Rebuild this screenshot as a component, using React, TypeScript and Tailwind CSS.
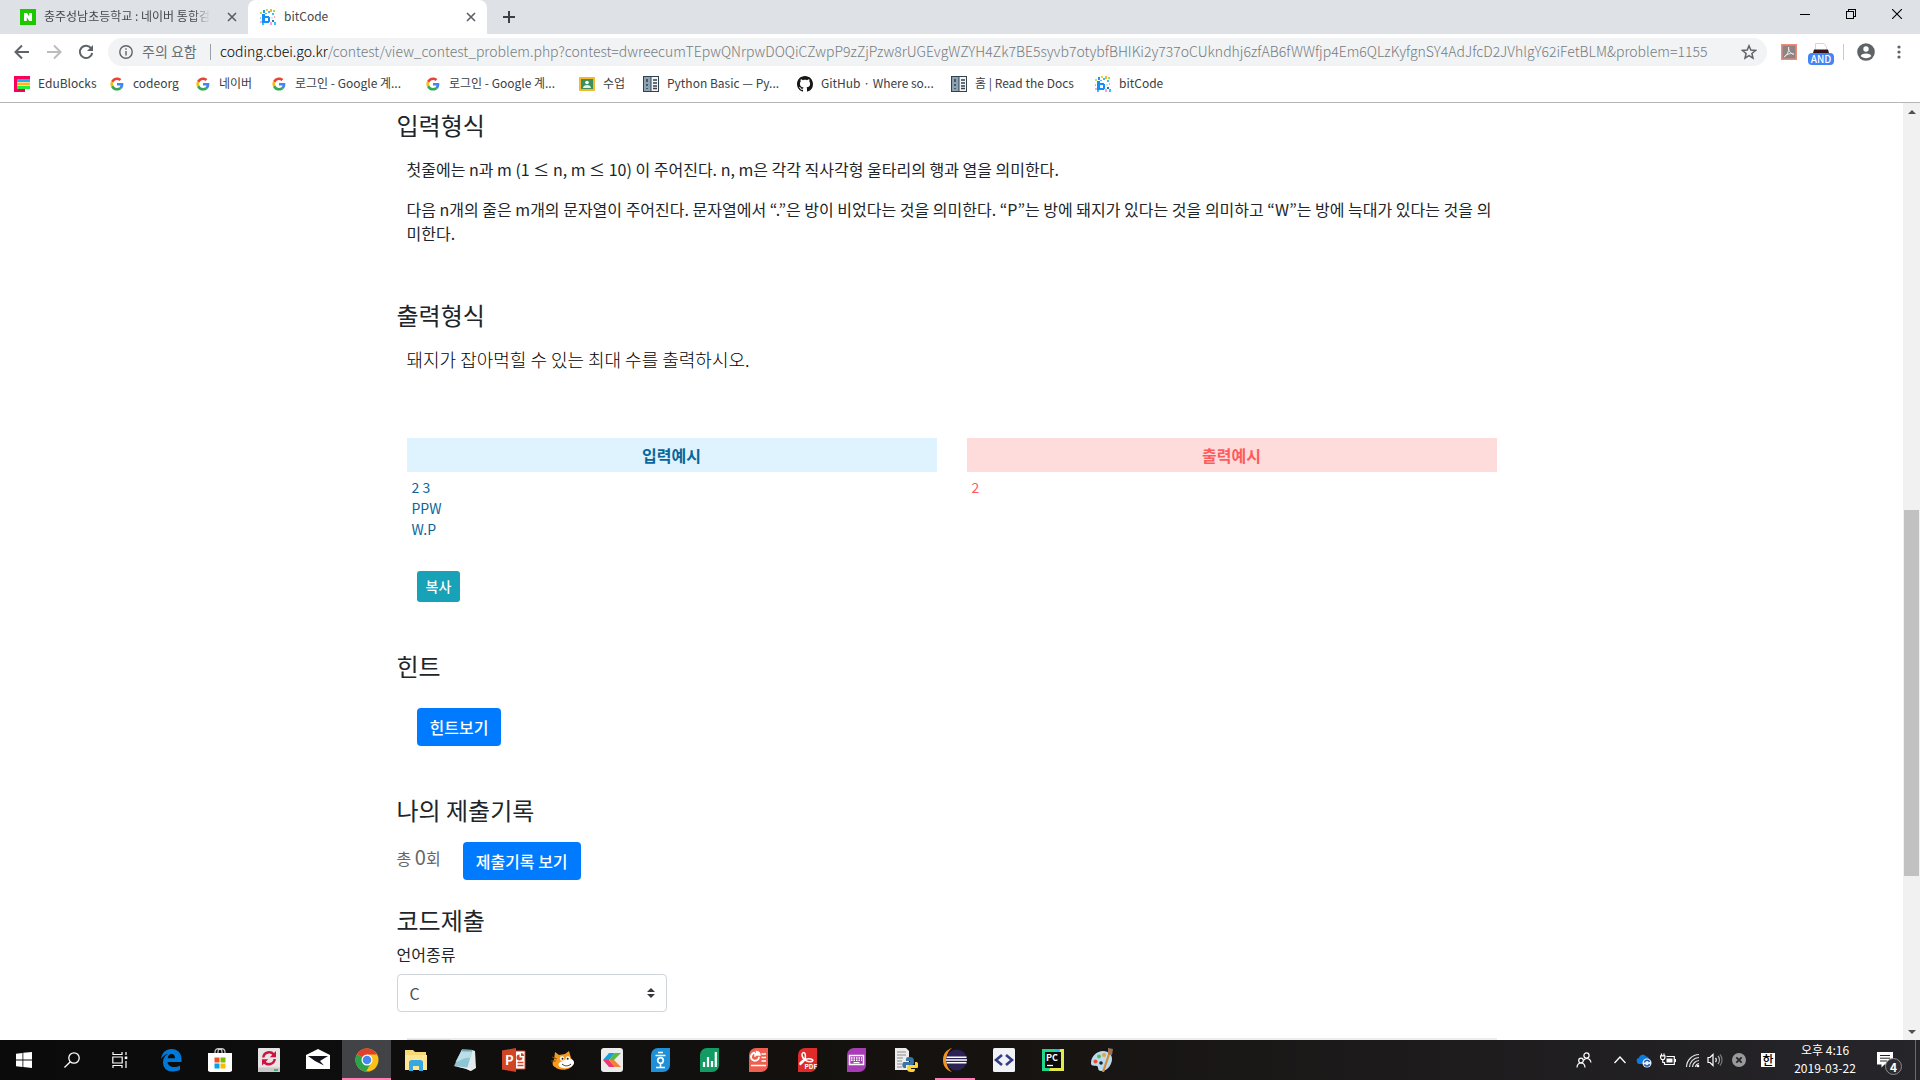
import type { ReactNode } from 'react';

const SANS = 'font-["Noto_Sans_CJK_KR",sans-serif]';

/* ---------- Small favicons ---------- */

function NaverIcon() {
  return (
    <svg viewBox="0 0 16 16" className="size-4 shrink-0" aria-hidden="true">
      <rect width="16" height="16" fill="#1ec800" />
      <path d="M4 4h3l2.200 3.600V4H12v8H9.200L6.800 8.300V12H4z" fill="#fff" />
    </svg>
  );
}

function BitCodeIcon() {
  const cells: [number, number, number, number, string][] = [
    [3, 1, 2, 3, '#1e9bf0'], [6, 0, 2, 2, '#ffc93c'], [8, 2, 2, 2, '#35c4f0'], [10, 0, 2, 3, '#f7b52c'],
    [13, 1, 2, 2, '#9adf4a'], [12, 4, 2, 2, '#35c4f0'], [0, 3, 2, 2, '#b7e35c'], [2, 5, 3, 9, '#1490f5'],
    [5, 7, 4, 2, '#1490f5'], [8, 8, 2, 5, '#1490f5'], [5, 12, 4, 2, '#1490f5'], [5, 4, 2, 1, '#45b6ff'],
    [0, 12, 2, 2, '#f7a8d8'], [2, 14, 2, 2, '#35c4f0'], [11, 8, 2, 2, '#cfe9ff'], [12, 11, 2, 2, '#2f6fb5'],
    [14, 13, 2, 3, '#35c4f0'], [10, 13, 2, 3, '#f0a0dc'], [0, 8, 1, 2, '#7fd0ff'], [14, 7, 1, 2, '#ffa3c2'],
  ];
  return (
    <svg viewBox="0 0 16 16" className="size-4 shrink-0" aria-hidden="true" shapeRendering="crispEdges">
      {cells.map(([x, y, w, h, c], i) => (
        <rect key={i} x={x} y={y} width={w} height={h} fill={c} />
      ))}
    </svg>
  );
}

function EduIcon() {
  return (
    <svg viewBox="0 0 16 16" className="size-4 shrink-0" aria-hidden="true">
      <path d="M0 0h16v3H3v10h8v3H0z" fill="#f9005f" />
      <rect x="3" y="3" width="13" height="3" fill="#12b4f5" />
      <rect x="3" y="6.500" width="13" height="3" fill="#ffb41f" />
      <rect x="3" y="10" width="13" height="3" fill="#1ff03a" />
    </svg>
  );
}

function GoogleIcon() {
  return (
    <svg viewBox="-5 -5 58 58" className="size-4 shrink-0" aria-hidden="true">
      <path fill="#EA4335" d="M24 9.500c3.540 0 6.710 1.220 9.210 3.600l6.850-6.850C35.900 2.380 30.470 0 24 0 14.620 0 6.510 5.380 2.560 13.220l7.980 6.190C12.430 13.720 17.740 9.500 24 9.500z" />
      <path fill="#4285F4" d="M46.980 24.550c0-1.570-.15-3.090-.38-4.550H24v9.020h12.940c-.58 2.960-2.260 5.480-4.780 7.180l7.730 6c4.510-4.180 7.090-10.360 7.090-17.650z" />
      <path fill="#FBBC05" d="M10.530 28.590c-.48-1.450-.76-2.990-.76-4.590s.27-3.140.76-4.590l-7.980-6.190C.92 16.460 0 20.120 0 24c0 3.880.92 7.540 2.560 10.780l7.970-6.190z" />
      <path fill="#34A853" d="M24 48c6.480 0 11.930-2.130 15.890-5.810l-7.730-6c-2.150 1.450-4.920 2.300-8.160 2.300-6.260 0-11.570-4.220-13.470-9.910l-7.980 6.190C6.510 42.620 14.620 48 24 48z" />
    </svg>
  );
}

function ClassroomIcon() {
  return (
    <svg viewBox="0 0 16 16" className="size-4 shrink-0" aria-hidden="true">
      <rect y="1" width="16" height="14" rx="1" fill="#f5b82a" />
      <rect x="2" y="3" width="12" height="10" fill="#3c8f5a" />
      <circle cx="8" cy="6.500" r="1.800" fill="#fff" />
      <path d="M4 12c0-2 2-3 4-3s4 1 4 3z" fill="#e4f2e8" />
    </svg>
  );
}

function DocsIcon() {
  return (
    <svg viewBox="0 0 16 16" className="size-4 shrink-0" aria-hidden="true">
      <rect x=".5" y=".5" width="15" height="15" fill="#8ba3b3" stroke="#33424d" />
      <rect x="8" y="1" width="7" height="14" fill="#f3f6f8" />
      <path d="M8 1v14" stroke="#33424d" />
      <path d="M10 4h4M10 7h4M10 10h4M10 12.500h4M4 3v3M4 8v2M4 12v1" stroke="#33424d" strokeWidth="1.500" />
    </svg>
  );
}

function GitHubIcon() {
  return (
    <svg viewBox="0 0 16 16" className="size-4 shrink-0" aria-hidden="true">
      <path fill="#161614" d="M8 0C3.580 0 0 3.580 0 8c0 3.540 2.290 6.530 5.470 7.590.4.07.55-.17.55-.38 0-.19-.01-.82-.01-1.490-2.010.37-2.530-.49-2.690-.94-.09-.23-.48-.94-.82-1.130-.28-.15-.68-.52-.01-.53.63-.01 1.080.58 1.230.82.72 1.210 1.870.87 2.330.66.07-.52.28-.87.51-1.070-1.780-.2-3.640-.89-3.640-3.950 0-.87.31-1.590.82-2.150-.08-.2-.36-1.020.08-2.120 0 0 .67-.21 2.200.82.64-.18 1.320-.27 2-.27s1.360.09 2 .27c1.530-1.040 2.200-.82 2.200-.82.44 1.100.16 1.920.08 2.120.51.56.82 1.270.82 2.150 0 3.070-1.870 3.750-3.650 3.950.29.25.54.73.54 1.480 0 1.070-.01 1.930-.01 2.200 0 .21.15.46.55.38A8.010 8.010 0 0 0 16 8c0-4.420-3.580-8-8-8z" />
    </svg>
  );
}

function CloseGlyph() {
  return (
    <svg viewBox="0 0 10 10" className="size-[10px]" aria-hidden="true">
      <path d="M1 1l8 8M9 1l-8 8" stroke="#5a5e63" strokeWidth="1.600" />
    </svg>
  );
}

/* ---------- Browser chrome ---------- */

function TabStrip() {
  return (
    <div className="flex h-[34px] items-stretch bg-[#dee1e6] text-xs text-[#45494d]">
      <div className="flex w-[248px] items-center pr-[11px] pl-5">
        <NaverIcon />
        <span className="ml-2 pb-0.5 whitespace-nowrap [mask-image:linear-gradient(to_right,black_90%,transparent)]">
          충주성남초등학교 : 네이버 통합검
        </span>
        <button type="button" aria-label="탭 닫기" className="ml-auto"><CloseGlyph /></button>
      </div>
      <div className="flex w-[239px] items-center rounded-t-lg bg-white pr-[11px] pl-3">
        <BitCodeIcon />
        <span className="ml-2 grow pb-0.5">bitCode</span>
        <button type="button" aria-label="탭 닫기"><CloseGlyph /></button>
      </div>
      <button type="button" aria-label="새 탭" className="ml-[15px] flex items-center">
        <svg viewBox="0 0 14 14" className="size-[14px]" aria-hidden="true">
          <path d="M7 1v12M1 7h12" stroke="#3c4043" strokeWidth="2" />
        </svg>
      </button>
      <div className="ml-auto flex h-[28px] items-center text-black">
        <button type="button" aria-label="최소화" className="flex w-[46px] justify-center">
          <svg viewBox="0 0 10 10" className="size-[10px]" shapeRendering="crispEdges"><path d="M0 5.500h10" stroke="currentColor" /></svg>
        </button>
        <button type="button" aria-label="이전 크기로" className="flex w-[46px] justify-center">
          <svg viewBox="0 0 10 10" className="size-[10px]" fill="none" shapeRendering="crispEdges">
            <path d="M.5 2.500h7v7h-7zM2.500 2.500v-2h7v7h-2" stroke="currentColor" />
          </svg>
        </button>
        <button type="button" aria-label="닫기" className="flex w-[46px] justify-center">
          <svg viewBox="0 0 10 10" className="size-[10px]"><path d="M0 0l10 10M10 0L0 10" stroke="currentColor" strokeWidth="1.100" /></svg>
        </button>
      </div>
    </div>
  );
}

function Toolbar() {
  return (
    <div className="flex h-9 items-center bg-white">
      <div className="flex w-[108px] items-center gap-4 pl-[14px]">
        <button type="button" aria-label="뒤로">
          <svg viewBox="0 0 16 16" className="size-4" fill="none" stroke="#5f6368" strokeWidth="2"><path d="M15 8H2M8 1.500L1.500 8 8 14.500" /></svg>
        </button>
        <button type="button" aria-label="앞으로">
          <svg viewBox="0 0 16 16" className="size-4" fill="none" stroke="#babcbe" strokeWidth="2"><path d="M1 8h13M8 1.500L14.500 8 8 14.500" /></svg>
        </button>
        <button type="button" aria-label="새로고침">
          <svg viewBox="0 0 16 16" className="size-4" fill="none"><path d="M13.300 4.500A6.200 6.200 0 1 0 14.200 9" stroke="#5f6368" strokeWidth="2" /><path d="M15 1v6H9z" fill="#5f6368" /></svg>
        </button>
      </div>
      <div className="flex h-7 min-w-0 grow items-center rounded-full bg-[#f1f3f4] pr-[10px] pl-[11px] text-sm leading-5 text-[#757b80]">
        <svg viewBox="0 0 14 14" className="size-[14px] shrink-0" fill="none" stroke="#5f6368" strokeWidth="1.400" aria-hidden="true">
          <circle cx="7" cy="7" r="6.200" /><path d="M7 6v4.500M7 3.300v1.500" />
        </svg>
        <span className="ml-[9px] w-[61px] shrink-0 pb-0.5 whitespace-nowrap text-[#6b7075]">주의 요함</span>
        <span className="ml-[7px] h-4 w-px shrink-0 bg-[#9aa0a6]" />
        <label htmlFor="address" className="ml-[9px] shrink-0 pb-0.5 font-light text-black">coding.cbei.go.kr</label>
        <input
          id="address"
          className="min-w-0 grow bg-transparent pb-0.5 font-light outline-none"
          defaultValue="/contest/view_contest_problem.php?contest=dwreecumTEpwQNrpwDOQiCZwpP9zZjPzw8rUGEvgWZYH4Zk7BE5syvb7otybfBHIKi2y737oCUkndhj6zfAB6fWWfjp4Em6QLzKyfgnSY4AdJfcD2JVhlgY62iFetBLM&problem=1155"
        />
        <button type="button" aria-label="북마크" className="ml-4">
          <svg viewBox="0 0 16 16" className="size-4" fill="none" stroke="#5f6368" strokeWidth="1.500"><path d="M8 1.800l1.800 4.300 4.700.4-3.600 3 1.100 4.600L8 11.700 4 14.100l1.100-4.600-3.600-3 4.700-.4z" /></svg>
        </button>
      </div>
      <div className="flex h-7 shrink-0 items-center">
        <svg viewBox="0 0 16 16" className="ml-[14px] size-4" aria-label="PDF">
          <rect x=".75" y=".75" width="14.500" height="14.500" fill="#8c8583" stroke="#f08a7c" strokeWidth="1.500" />
          <path d="M3.300 12.800C5.500 11.500 8.500 7.500 7.600 3.200c-.6 3 1.600 6.300 5.200 7-2.500-1.300-6.500-.6-9.500 2.600z" fill="none" stroke="#f3eeec" />
        </svg>
        <div className="ml-[11px] flex w-[26px] flex-col items-center pt-1">
          <svg viewBox="0 0 16 10" className="h-[10px] w-4" aria-hidden="true">
            <path d="M2.500 8V.5H11L13.500 4v4" fill="#fff" stroke="#d7d7d7" />
            <path d="M1 6.500h14l1 3.500H0z" fill="#35151a" />
          </svg>
          <span className="h-3 w-full rounded-sm bg-[#4285f4] text-center text-[10px] leading-3 font-medium text-white">AND</span>
        </div>
        <span className="ml-[9px] h-4 w-px bg-[#c8cacc]" />
        <button type="button" aria-label="프로필" className="ml-[13px]">
          <svg viewBox="0 0 18 18" className="size-[18px]"><circle cx="9" cy="9" r="8.800" fill="#5f6368" /><circle cx="9" cy="6" r="2.700" fill="#fff" /><path d="M3.700 13c.9-2 3-2.600 5.300-2.600s4.400.6 5.300 2.600c-1.300 1.400-3.100 2.200-5.300 2.200S5 14.400 3.700 13z" fill="#fff" /></svg>
        </button>
        <button type="button" aria-label="메뉴" className="mr-[13px] ml-4">
          <svg viewBox="0 0 16 16" className="size-4" fill="#5f6368"><circle cx="8" cy="3" r="1.600" /><circle cx="8" cy="8" r="1.600" /><circle cx="8" cy="13" r="1.600" /></svg>
        </button>
      </div>
    </div>
  );
}

const bookmarks: { label: string; icon: ReactNode; width: string }[] = [
  { label: 'EduBlocks', icon: <EduIcon />, width: 'w-[95px]' },
  { label: 'codeorg', icon: <GoogleIcon />, width: 'w-[86px]' },
  { label: '네이버', icon: <GoogleIcon />, width: 'w-[76px]' },
  { label: '로그인 - Google 계...', icon: <GoogleIcon />, width: 'w-[154px]' },
  { label: '로그인 - Google 계...', icon: <GoogleIcon />, width: 'w-[154px]' },
  { label: '수업', icon: <ClassroomIcon />, width: 'w-[64px]' },
  { label: 'Python Basic — Py...', icon: <DocsIcon />, width: 'w-[154px]' },
  { label: 'GitHub · Where so...', icon: <GitHubIcon />, width: 'w-[154px]' },
  { label: '홈 | Read the Docs', icon: <DocsIcon />, width: 'w-[144px]' },
  { label: 'bitCode', icon: <BitCodeIcon />, width: 'w-[95px]' },
];

function BookmarkBar() {
  return (
    <nav className="flex h-[33px] items-center border-b border-[#b6b4b6] bg-white pb-1 pl-[14px] text-xs text-[#3c4043]">
      {bookmarks.map((b, i) => (
        <a key={i} href="#" className={`flex shrink-0 items-center gap-2 whitespace-nowrap ${b.width}`}>
          {b.icon}
          <span className="pb-0.5">{b.label}</span>
        </a>
      ))}
    </nav>
  );
}

/* ---------- Page ---------- */

function Heading({ children, className = '' }: { children: ReactNode; className?: string }) {
  return <h2 className={`text-2xl leading-7 ${className}`}>{children}</h2>;
}

function ProblemPage() {
  return (
    <main className="min-w-0 grow overflow-hidden bg-white text-base text-[#212529]">
      <div className="mx-auto max-w-[1140px] px-[15px] pt-2">
        <Heading>입력형식</Heading>
        <div className="mt-[18px] flex flex-col gap-4 px-[10px]">
          <p>첫줄에는 n과 m (1 ≤ n, m ≤ 10) 이 주어진다. n, m은 각각 직사각형 울타리의 행과 열을 의미한다.</p>
          <p>
            다음 n개의 줄은 m개의 문자열이 주어진다. 문자열에서 “.”은 방이 비었다는 것을 의미한다. “P”는 방에 돼지가 있다는
            것을 의미하고 “W”는 방에 늑대가 있다는 것을 의미한다.
          </p>
        </div>

        <Heading className="mt-14">출력형식</Heading>
        <p className="mt-[18px] px-[10px] text-lg leading-6 font-light text-black">돼지가 잡아먹힐 수 있는 최대 수를 출력하시오.</p>

        <div className="mt-[67px] grid grid-cols-2 gap-[30px] px-[10px]">
          <section className="text-[#0b6599]">
            <h3 className="bg-[#dff3ff] text-center leading-[34px] font-bold">입력예시</h3>
            <div className="mt-[5px] px-[5px] text-sm leading-[21px]">
              <p>2 3</p>
              <p>PPW</p>
              <p>W.P</p>
            </div>
          </section>
          <section className="text-[#ff5b5b]">
            <h3 className="bg-[#ffdcdc] text-center leading-[34px] font-bold">출력예시</h3>
            <p className="mt-[5px] px-[5px] text-sm leading-[21px]">2</p>
          </section>
        </div>
        <div className="mt-[31px] flex px-5">
          <button type="button" className="rounded-[3px] bg-[#17a2b8] px-[9px] py-[5px] text-sm leading-[21px] font-medium text-white">
            복사
          </button>
        </div>

        <Heading className="mt-[50px]">힌트</Heading>
        <div className="mt-7 flex px-5">
          <button type="button" className="rounded bg-[#007bff] px-[13px] py-[7px] font-medium text-white">힌트보기</button>
        </div>

        <Heading className="mt-[50px]">나의 제출기록</Heading>
        <div className="mt-[18px] flex items-start">
          <p className="mr-[22px] leading-[30px] text-[#666]">
            총 <span className="text-xl leading-[30px]">0</span>회
          </p>
          <button type="button" className="rounded bg-[#007bff] px-[13px] py-[7px] font-medium text-white">제출기록 보기</button>
        </div>

        <Heading className="mt-[26px]">코드제출</Heading>
        <label htmlFor="language" className="mt-2 block">언어종류</label>
        <div className="relative mt-2 w-[270px]">
          <select id="language" className="h-[38px] w-full appearance-none rounded border border-[#ced4da] bg-white pr-7 pl-3 text-[#495057]">
            <option>C</option>
          </select>
          <svg viewBox="0 0 8 10" className="pointer-events-none absolute top-[14px] right-3 h-[10px] w-2" fill="#343a40" aria-hidden="true">
            <path d="M4 0l4 4H0zM4 10L0 6h8z" />
          </svg>
        </div>
        <div className="mx-[10px] mt-[26px] h-10 bg-[#ededed]">
          <div className="h-full w-11 border-t border-[#ededed] bg-[#dcdcdc]" />
        </div>
      </div>
    </main>
  );
}

function Scrollbar() {
  return (
    <div className="flex w-[17px] shrink-0 flex-col bg-[#f1f1f1]">
      <button type="button" aria-label="위로 스크롤" className="flex h-[17px] items-center justify-center">
        <svg viewBox="0 0 8 4" className="h-1 w-2" fill="#505050"><path d="M4 0l4 4H0z" /></svg>
      </button>
      <div className="grow-[390]" />
      <div className="mx-px grow-[366] bg-[#c1c1c1]" />
      <div className="grow-[147]" />
      <button type="button" aria-label="아래로 스크롤" className="flex h-[17px] items-center justify-center">
        <svg viewBox="0 0 8 4" className="h-1 w-2" fill="#505050"><path d="M0 0h8L4 4z" /></svg>
      </button>
    </div>
  );
}

/* ---------- Taskbar ---------- */

function App24({ children }: { children: ReactNode }) {
  return <svg viewBox="0 0 24 24" className="size-6" aria-hidden="true">{children}</svg>;
}

const LEAF = 'M9 0h12v17a7 7 0 0 1-7 7H2V7a7 7 0 0 1 7-7z';

const apps: { name: string; icon: ReactNode; active?: boolean; open?: boolean }[] = [
  {
    name: 'Edge',
    icon: <App24><path d="M2 11C3 4.500 7 1 12.500 1 19 1 22.500 5.500 22.500 11v3H8.500c.3 3.500 3.300 5 6.500 5 2.300 0 4.300-.6 6-1.600v4.400c-2 1.100-4.400 1.700-7 1.700-6 0-10-3.300-10-9.300C4 10.300 6 7.500 9 6 5.800 6.500 3.400 8.300 2 11zm6.700-.8H16c0-2.700-1.300-4.200-3.500-4.200S9 7.600 8.700 10.200z" fill="#0078d7" /></App24>,
  },
  {
    name: 'Store',
    icon: <App24><path d="M0 5h24v18l-2 1H2l-2-1z" fill="#fff" /><path d="M7 5V4c0-2.300 1.500-3.300 3.500-3.300S14 1.700 14 4v1M10 5V4c0-2.300 1-3.300 3-3.300S17 1.700 17 4v1" fill="none" stroke="#cfcfcf" strokeWidth="1.200" /><path d="M6.500 9.500h5v5h-5z" fill="#f25022" /><path d="M12.500 9.500h5v5h-5z" fill="#7fba00" /><path d="M6.500 15.500h5v5h-5z" fill="#00a4ef" /><path d="M12.500 15.500h5v5h-5z" fill="#ffb900" /></App24>,
  },
  {
    name: 'Sync',
    icon: <App24><rect x="1" y="0" width="22" height="24" rx="1" fill="#e6e4e5" /><path d="M1 19.500h22V24H1z" fill="#c9c8c9" /><path d="M17 7A5.800 5.800 0 0 0 6.300 9.500M7 13.500A5.800 5.800 0 0 0 17.700 11" fill="none" stroke="#cf1242" strokeWidth="2.500" /><path d="M19 3v6.200h-6.200zM5 17.500v-6.200h6.200z" fill="#cf1242" /><rect x="17" y="21" width="4" height="2" fill="#4fae76" /></App24>,
  },
  {
    name: 'Mail',
    icon: <App24><path d="M0 7L12 1l12 6v14H0z" fill="#fff" /><path d="M2 8h20l-8 5 4 4.500L9 13z" fill="#131419" /></App24>,
  },
  {
    name: 'Chrome',
    active: true,
    icon: <App24><circle cx="12" cy="12" r="11.500" fill="#fbc116" /><path d="M12 12L2 6.200A11.500 11.500 0 0 1 22 6.500H12z" fill="#e0402e" /><path d="M12 12L2 6.200A11.500 11.500 0 0 0 11 23.500l5-8.500z" fill="#2ba24c" /><circle cx="12" cy="12" r="5.500" fill="#fff" /><circle cx="12" cy="12" r="4.300" fill="#4688f1" /></App24>,
  },
  {
    name: '탐색기',
    icon: <App24><path d="M1 2h8l2 2h11v18H1z" fill="#f7d978" /><path d="M1 7h22v15H1z" fill="#ffe694" /><path d="M5 23v-9.500l2-1.500h10l2 1.500V23h-4v-5H9v5z" fill="#36a7e0" /></App24>,
  },
  {
    name: '메모장',
    icon: <App24><path d="M19 2l3 1 1 17-5 3-5-2z" fill="#e3eaec" /><path d="M9 1.500L19.500 2 14 21 1 18z" fill="#8fc5d2" /><path d="M9 1.500L19.500 2l-2.500 8C11 9 8 13 2.500 14z" fill="#b9e0e8" /><path d="M1 18l13 3 4 2-1-3z" fill="#f4f4f4" /><path d="M9.500 2.500h10" stroke="#3b6e7d" strokeWidth="2" strokeDasharray="1 1" /></App24>,
  },
  {
    name: 'PowerPoint',
    icon: <App24><path d="M13 3h10v18H13z" fill="#fff" stroke="#d04526" /><path d="M15.500 14.500h6M15.500 17.500h6" stroke="#d04526" strokeWidth="1.500" /><path d="M17.500 6.500a3 3 0 1 0 3 3h-3z" fill="#d04526" /><path d="M19 5v3h3a3 3 0 0 0-3-3z" fill="#d04526" /><path d="M0 2.500L14 0v24L0 21.500z" fill="#d04526" /><text x="3" y="17" fontSize="13" fontWeight="700" fill="#fff">P</text></App24>,
  },
  {
    name: 'Scratch',
    icon: <App24><path d="M4 4l4 3 6-1 4-3 2 7c3 3 3 8-1 10-5 3-12 2-15-1-3-1-3-5-1-7z" fill="#f89b1c" /><path d="M1 9l5 2M0 13l5 0" stroke="#8a4b10" /><path d="M12 13c3-3 10-3 11 1 1 5-9 8-14 5-3-2-1-5 3-6z" fill="#fff" /><circle cx="11" cy="10.500" r="2.200" fill="#fff" /><circle cx="17" cy="10.500" r="2.200" fill="#fff" /><circle cx="11.500" cy="10.700" r="1" fill="#222" /><circle cx="16.700" cy="10.700" r="1" fill="#222" /><path d="M11 16c3 2.500 6 2.500 9 0" fill="none" stroke="#333" /></App24>,
  },
  {
    name: 'Entry',
    icon: <App24><rect x="1" y="0" width="22" height="24" rx="3" fill="#ececec" /><path d="M3 12l6-7h6l-6 7z" fill="#17a0dd" /><path d="M9 12l6-7h6l-7 7z" fill="#58b947" /><path d="M3 12h6l6 7H9z" fill="#f0386b" /><path d="M9 12h5l7 7h-6z" fill="#f58233" /></App24>,
  },
  {
    name: '한글',
    icon: <App24><path d={LEAF} fill="#1d90d8" /><path d="M9 4.500h5M6.500 7.500h10M11.500 15.500v4M7 19.500h9" stroke="#fff" strokeWidth="1.600" /><circle cx="11.500" cy="12.500" r="2.800" fill="none" stroke="#fff" strokeWidth="1.700" /></App24>,
  },
  { name: '한셀', icon: <App24><path d={LEAF} fill="#129c63" /><path d="M6 19v-5M10 19V9M14 19v-6M17.800 19V4" stroke="#fff" strokeWidth="2.200" /></App24> },
  {
    name: '한쇼',
    icon: <App24><path d={LEAF} fill="#ee5f50" /><path d="M8 4.800a4 4 0 1 0 4 4" fill="none" stroke="#fff" strokeWidth="1.900" /><path d="M8 8.800V5M9.500 3.500a4 4 0 0 1 3.500 3.500h-3.500zM14.500 6h4.500M14.500 9.500h4.500M14.500 13h4.500M4 17.500h15" stroke="#fff" strokeWidth="1.500" fill="#fff" /></App24>,
  },
  {
    name: '한PDF',
    icon: <App24><path d={LEAF} fill="#e02b2b" /><path d="M4.500 16.500c4-3 6-7 4.500-11-1-2-3.500-.5-3 2 1 5 7 7.500 10.500 5.500 2-2-4-3-7.500-1.500-3.500 1-6.500 4.500-4.500 5z" fill="none" stroke="#fff" strokeWidth="1.500" /><text x="8.500" y="21" fontSize="6.500" fontWeight="700" fill="#fff">PDF</text></App24>,
  },
  {
    name: '한글 입력기',
    icon: <App24><path d={LEAF} fill="#a63db4" /><rect x="4.500" y="7.500" width="14" height="9" fill="none" stroke="#fff" strokeWidth="1.500" /><path d="M6 10h11M6 12.300h11" stroke="#fff" strokeWidth="1.500" strokeDasharray="1.500 1" /><path d="M8.500 14.600h6" stroke="#fff" strokeWidth="1.300" /></App24>,
  },
  {
    name: 'IDLE',
    icon: <App24><path d="M1 0h11l3 3v19H1z" fill="#ececec" /><path d="M3 4h9M3 7h9M3 10h6M3 13h5M3 16h5M3 19h5" stroke="#8a8a8a" strokeWidth="1.200" /><path d="M15 9c-3 0-3 1.500-3 4h4v1h-6c-2 0-2.500 5 0 6h2v-3h6c1.500 0 2-1 2-3 0-4-1-5-5-5z" fill="#3a75a8" /><path d="M18 24c3 0 3-1.500 3-3h-4v-1h6c2 0 1.500-5 0-6h-2v3h-5c-2 0-3 1-3 3 0 3 1 4 5 4z" fill="#ffd43b" /></App24>,
  },
  {
    name: 'Eclipse',
    open: true,
    icon: <App24><path d="M9 0C3 2 0 6 0 12s3 10 9 12C5 21 3.500 17 3.500 12S5 3 9 0z" fill="#f7941e" /><circle cx="13.500" cy="12" r="10.500" fill="#2c2255" /><path d="M3.500 9.200h20M3 12h21M3.500 14.800h20" stroke="#fff" strokeWidth="1.400" /></App24>,
  },
  {
    name: '코드 편집기',
    icon: <App24><rect x="1" y="0" width="22" height="24" rx="1.500" fill="#f0f2f6" /><path d="M10 7l-6 5 6 5M14 7l6 5-6 5" fill="none" stroke="#343c85" strokeWidth="2.600" /></App24>,
  },
  {
    name: 'PyCharm',
    icon: <App24><path d="M1 1h22v22H1z" fill="#21d789" /><path d="M17 1h6v22H8z" fill="#e4e84b" /><path d="M14 1h5l-1 6z" fill="#1fb5ea" /><rect x="4" y="4" width="16" height="16" fill="#0a0a0a" /><text x="5" y="13" fontSize="9" fontWeight="700" fill="#fff">PC</text><path d="M6 17.500h6" stroke="#fff" strokeWidth="1.300" /></App24>,
  },
  {
    name: '그림판',
    icon: <App24><path d="M1 15C1 8 7 3 13 3s9 4 9 8-3 12-11 12c-4 0-2-4-4-5s-6 1-6-3z" fill="#b9dcef" /><circle cx="5.500" cy="13.500" r="2" fill="#e74c3c" /><circle cx="9" cy="8.500" r="2" fill="#5cb85c" /><circle cx="14" cy="7" r="2" fill="#f0a030" /><circle cx="11" cy="15" r="1.800" fill="#1b2430" /><path d="M19.500 5L13 24" stroke="#d68a37" strokeWidth="2.200" /><path d="M18 0l5 1-1 6-4-1z" fill="#9c7355" /></App24>,
  },
];

function Taskbar() {
  return (
    <footer className="flex h-10 shrink-0 items-stretch bg-linear-to-r from-[#0b0b0c] via-[#15120f] to-[#26252a] text-white">
      <button type="button" aria-label="시작" className="flex w-12 items-center justify-center">
        <svg viewBox="0 0 16 16" className="size-4" fill="#fff"><path d="M0 1.800l6.500-.9v6.600H0zM7.300.8L16 0v7.500H7.300zM0 8.400h6.500v6.600L0 14.200zM7.300 8.400H16V16l-8.700-.9z" /></svg>
      </button>
      <button type="button" aria-label="검색" className="flex w-12 items-center justify-center">
        <svg viewBox="0 0 16 16" className="size-4" fill="none" stroke="#fff" strokeWidth="1.300"><circle cx="10" cy="6" r="5.200" /><path d="M6.300 9.700L.5 15.500" /></svg>
      </button>
      <button type="button" aria-label="작업 보기" className="flex w-[50px] items-center justify-center pr-0.5">
        <svg viewBox="0 0 16 16" className="size-4" fill="none" stroke="#fff" strokeWidth="1.200"><path d="M1 0v2.500h9V0M1 16v-2.500h9V16M.8 5h9.400v6H.8zM14 0v3M14 9v7" /><path d="M12.700 4.500h2.600v2.600h-2.600z" fill="#fff" stroke="none" /></svg>
      </button>
      {apps.map((a) => (
        <button
          key={a.name}
          type="button"
          aria-label={a.name}
          className={`flex w-[49px] flex-col items-center justify-between ${a.active ? 'bg-[#424347]' : ''}`}
        >
          <span className="pt-2">{a.icon}</span>
          {a.active && <span className="h-0.5 w-full bg-[#ff7eb6]" />}
          {a.open && <span className="h-0.5 w-10 bg-[#ff7eb6]" />}
        </button>
      ))}
      <div className="ml-auto flex items-center">
        <svg viewBox="0 0 16 16" className="size-4" fill="none" stroke="#fff" strokeWidth="1.200" aria-label="피플"><circle cx="10.500" cy="3.500" r="2.600" /><path d="M7.500 8.500c.8-1.300 1.800-2 3.300-2 2.300 0 3.700 1.500 4.200 4" /><circle cx="5" cy="8.500" r="2.300" /><path d="M1 15.500c.2-3 2-4.500 4-4.500s3.800 1.500 4 4.500" /></svg>
        <svg viewBox="0 0 14 14" className="ml-[21px] size-[14px]" fill="none" stroke="#fff" strokeWidth="1.300" aria-label="숨겨진 아이콘"><path d="M1.500 10L7 4l5.500 6" /></svg>
        <svg viewBox="0 0 16 16" className="ml-[9px] size-4" aria-label="OneDrive"><path d="M1 10c-1-2 0-4 2-4 .5-3 5-4.500 7-1.500 2 0 3 1.500 3 3.500L8 12H3c-1 0-2-1-2-2z" fill="#0f7bd8" /><circle cx="11" cy="11" r="4.500" fill="#e9f1fb" /><path d="M8.500 10.500a2.600 2.600 0 0 1 5-.5M13.500 12a2.600 2.600 0 0 1-5 .3" fill="none" stroke="#1d56b5" strokeWidth="1.500" /></svg>
        <svg viewBox="0 0 16 16" className="ml-2 size-4" fill="none" stroke="#fff" strokeWidth="1.200" aria-label="배터리"><path d="M6.500 4.500h7.800v8H4.500V10" /><path d="M15.500 7v3" /><path d="M6.500 6.500h6v4h-6z" fill="#fff" stroke="none" /><path d="M1.500 1.500v2M4 1.500v2M.6 3.800h4.300v2L4 7.500H1.500L.6 5.800zM2.800 7.500v3h2" /></svg>
        <svg viewBox="0 0 16 16" className="ml-[9px] size-4" fill="none" stroke="#e4e4e4" strokeWidth="1.200" aria-label="Wi-Fi"><path d="M1.500 15A13 13 0 0 1 14 2.500M4.500 15A10 10 0 0 1 14 5.500M7.500 15A7 7 0 0 1 14 8.500M10.500 15a4 4 0 0 1 3.500-3.500" /><circle cx="13" cy="14" r="1.300" fill="#fff" stroke="none" /></svg>
        <svg viewBox="0 0 16 16" className="ml-[6px] size-4" fill="none" stroke="#fff" strokeWidth="1.200" aria-label="소리"><path d="M1 5.500h2L6 2.500v11l-3-3H1z" /><path d="M8.500 6c1 1 1 3 0 4" /><path d="M11 4c2 2.200 2 5.800 0 8" stroke="#aaa" /><path d="M13 2.500c2.700 3 2.700 8 0 11" stroke="#777" /></svg>
        <svg viewBox="0 0 14 14" className="ml-[9px] size-[14px]" aria-label="오류"><circle cx="7" cy="7" r="7" fill="#9a9a9a" /><path d="M4.300 4.300l5.400 5.400M9.700 4.300L4.300 9.700" stroke="#262528" strokeWidth="1.800" /></svg>
        <span className="ml-[15px] size-[14px] bg-white text-center text-xs leading-[13px] font-medium text-black">한</span>
        <div className="ml-[15px] w-[70px] pb-0.5 text-center text-xs leading-[18px]">
          <p>오후 4:16</p>
          <p>2019-03-22</p>
        </div>
        <button type="button" aria-label="알림 4개" className="relative ml-[17px] mr-[11px] flex h-10 w-[27px] items-center">
          <svg viewBox="0 0 16 16" className="size-4" aria-hidden="true"><path d="M0 0h16v12.500H7.500L4.500 15.500v-3H0z" fill="#fff" /><path d="M3 3.500h10M3 6.200h10M3 9h7" stroke="#26252a" /></svg>
          <span className="absolute top-[18px] left-2 flex size-[17px] items-center justify-center rounded-full border border-[#8b8b8d] bg-[#2d2c31] text-xs leading-none font-bold">4</span>
        </button>
        <span className="mr-1 h-10 w-px bg-[#6b6a6e]" />
      </div>
    </footer>
  );
}

export default function App() {
  return (
    <div className={`flex h-screen flex-col overflow-hidden bg-white ${SANS}`}>
      <header className="shrink-0">
        <TabStrip />
        <Toolbar />
        <BookmarkBar />
      </header>
      <div className="flex min-h-0 grow">
        <ProblemPage />
        <Scrollbar />
      </div>
      <Taskbar />
    </div>
  );
}
